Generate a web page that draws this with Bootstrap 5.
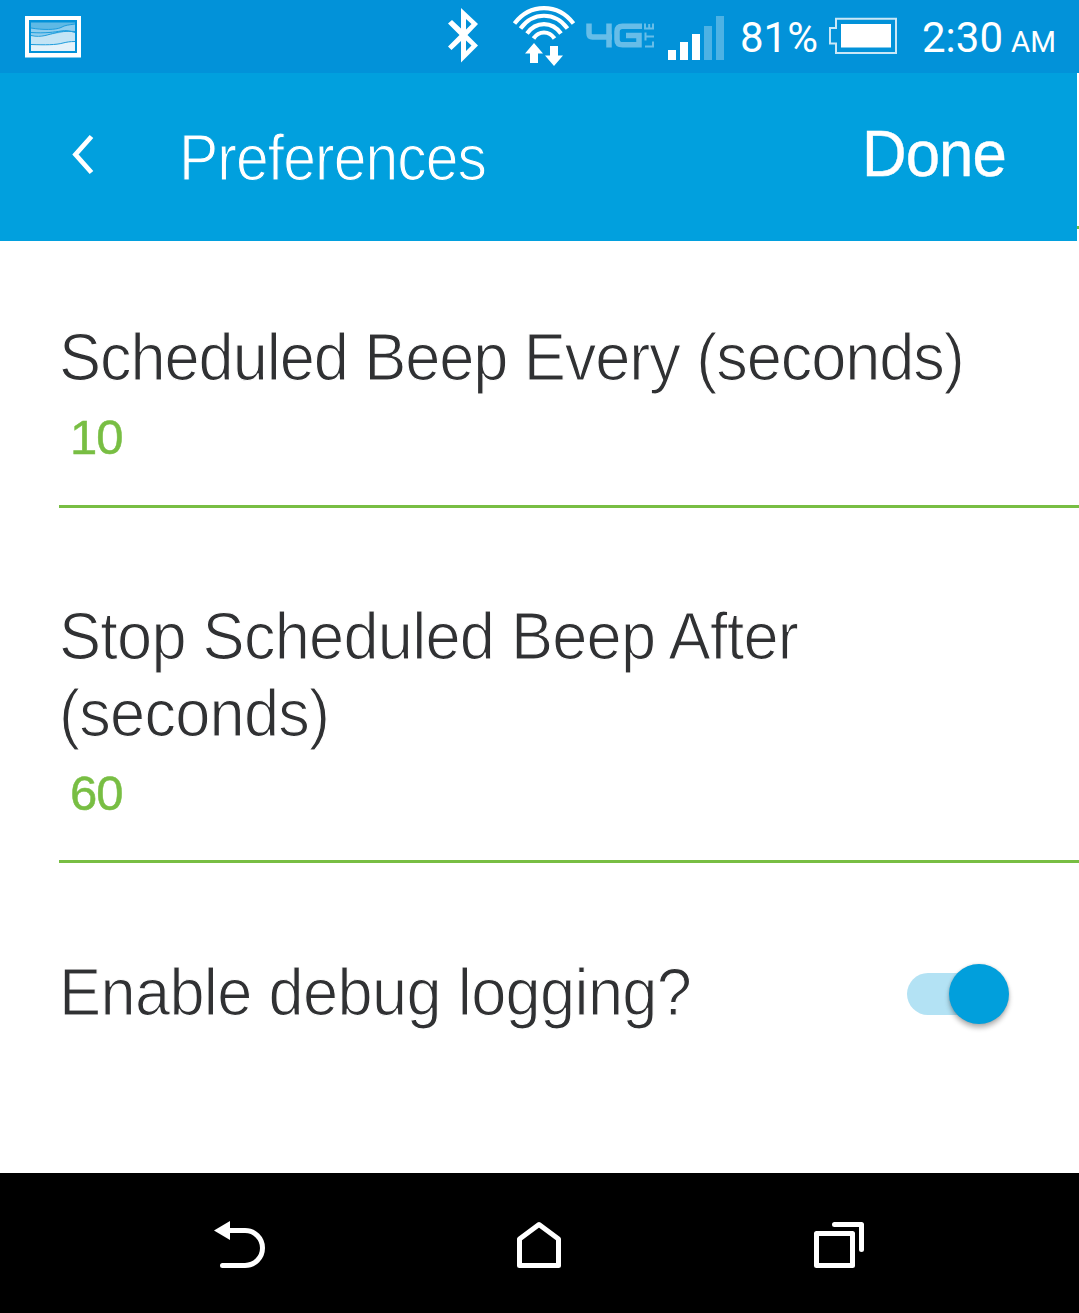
<!DOCTYPE html>
<html lang="en">
<head>
<meta charset="utf-8">
<meta name="viewport" content="width=device-width, initial-scale=1">
<title>Preferences</title>
<link href="https://cdn.jsdelivr.net/npm/bootstrap@5.3.0/dist/css/bootstrap.min.css" rel="stylesheet">
<style>
  body { font-family: "Liberation Sans", Arial, sans-serif; color: #303133; background: #fff; }
  .screen { width: 1079px; height: 1313px; }
  .status-bar { height: 73px; background: #0292d9; font-family: Roboto, sans-serif; color: #fff; }
  .status-bar svg, .nav-keys svg, .back-key svg { display: block; }
  .battery-level { font-size: 42px; line-height: 50px; margin-left: 16px; width: 89px; padding-top: 2px; }
  .clock { font-size: 42px; line-height: 50px; margin-left: 25px; padding-top: 6px; white-space: nowrap; }
  .clock span { font-size: 29.5px; margin-left: 8px; }
  .app-bar { height: 168px; width: 1077px; background: #01a0de; color: #fff; }
  .edge-mark { width: 2px; height: 3px; margin-top: 153px; background: #78be43; }
  .back-key { margin: -7px 0 0 72px; width: 108px; }
  .thin { display: inline-block; transform-origin: 0 0; white-space: nowrap; }
  .title-text { font-size: 64.5px; line-height: 76px; font-weight: 400; letter-spacing: -1px; transform: scaleX(.912); -webkit-text-stroke: 1.2px #01a0de; margin: 1px 0 0 -1px; }
  .done-btn { font-size: 64px; line-height: 76px; letter-spacing: -1px; transform: scaleX(.965); transform-origin: 0 0; margin-top: -6px; width: 215px; color: #fff; -webkit-text-stroke: .4px #fff; }
  .pref { margin-left: 59px; border-bottom: 3px solid #78be43; }
  .pref-label { font-size: 67px; line-height: 77px; letter-spacing: -1.13px; transform: scaleX(.942); -webkit-text-stroke: 1.2px #fff; }
  .pref-value { font-size: 49px; line-height: 60px; letter-spacing: -1px; color: #78be43; -webkit-text-stroke: .5px #78be43; margin: 12px 0 38px 11px; }
  .pref-every { padding-top: 77px; height: 267px; }
  .pref-stop { padding-top: 89px; height: 355px; }
  .pref-stop .pref-label { letter-spacing: -.8px; }
  .pref-debug { padding-top: 90px; margin-left: 59px; }
  .pref-debug .pref-label { letter-spacing: -.68px; }
  .toggle { width: 102px; height: 60px; margin: 11px 70px 0 0; }
  .toggle-track { width: 84px; height: 42px; background: #b3e2f4; }
  .toggle-thumb { width: 60px; height: 60px; right: 0; top: 0; background: #019fdc; box-shadow: 0 4px 5px rgba(0,0,0,.28), 0 0 3px rgba(0,0,0,.15); }
  .nav-keys { height: 140px; background: #000; }
</style>
<script src="https://cdn.jsdelivr.net/npm/bootstrap@5.3.0/dist/js/bootstrap.bundle.min.js"></script>
</head>
<body>
<div class="screen d-flex flex-column overflow-hidden">
  <div class="status-bar d-flex align-items-center flex-shrink-0">
    <svg width="724" height="73" viewBox="0 0 724 73" fill="none">
      <!-- gallery notification -->
      <path d="M25 16H81V57.500H25z" fill="#fff"/>
      <path d="M29 20H77V53H29z" fill="#0292d9"/>
      <path d="M31 22.500H75V51H31z" fill="#5eb9e5"/>
      <path d="M31 28C42 30 56 30 61 27.500C65 25 69 25 75 24V51H31z" fill="#8fcdee"/>
      <path d="M31 35C45 38 57 32 75 31V51H31z" fill="#c3e4f5"/>
      <path d="M31 44.500C45 45 56 45 63 43C67 42 70 41.500 75 41.500V51H31z" fill="#e4f2fa"/>
      <path d="M31 28C42 30 56 30 61 27.500C65 25 69 25 75 24M31 32.500C45 33.500 55 32 61 31C66 30 70 31 75 32.500M31 35.500C42 38 49 34 55 33C60 31.500 66 31 75 31.500M31 44.500C45 45 56 45 63 43C67 42 70 41.500 75 41.500" stroke="#1c9cdc"/>
      <!-- bluetooth -->
      <path fill-rule="evenodd" d="M461 8L478 24L467.500 35L478 45.500L461 62.500V41L451.500 50L448 46.500L459.500 35L448 23.500L452 20L461 28.500zM466 19V29.500L471.500 24zM466 40.500V51L471.500 45.500z" fill="#fff"/>
      <!-- wifi -->
      <g stroke="#fff" stroke-width="4.200">
        <path d="M514.500 23.500C530 3 558 3 573.500 23.500"/>
        <path d="M520.500 28.500C533 11.500 555 11.500 567.500 28.500"/>
        <path d="M527 33.500C536 21 552 21 561 33.500"/>
        <path d="M533.500 38.500C539 30.500 549 30.500 554.500 38.500"/>
      </g>
      <path d="M534 43L543 53.500H538V63H530V53.500H525zM550 46H558V55.500H563L554 66L545 55.500H550z" fill="#fff"/>
      <!-- 4G LTE network badge -->
      <g stroke="#67bde8" stroke-width="5.500">
        <path d="M589 23.500V33.500Q589 37 592.500 37H612M609 23.500V47.500"/>
        <path d="M642 26.200H622.500Q617 26.200 617 31.500V39.500Q617 44.800 622.500 44.800H639V35.500H626"/>
      </g>
      <path d="M645.500 29V24H653V29M649.200 24V28.500" stroke="none"/>
      <path d="M645 23.500V28.500H653V23.500M649.200 24V28.500M645 36.500H654M645.500 32.500V40.500M645 46.500H653V41.500" stroke="#67bde8" stroke-width="2"/>
      <!-- signal -->
      <path d="M668 50h8v10h-8zM680 42h8v18h-8zM692 34h8v26h-8z" fill="#fff"/>
      <path d="M704 26h8v34h-8zM716 16h8v44h-8z" fill="#4db2e4"/>
    </svg>
    <div class="battery-level">81%</div>
    <svg width="68" height="73" viewBox="0 0 68 73">
      <path d="M7 18.700H67V53H7V43.500H1V28H7z" fill="none" stroke="#c9e7f7" stroke-width="2"/>
      <path d="M12 24H62V47.500H12z" fill="#fff"/>
    </svg>
    <div class="clock">2:30<span>AM</span></div>
  </div>

  <div class="d-flex flex-shrink-0">
    <header class="app-bar d-flex align-items-center flex-shrink-0">
      <a class="back-key" href="#" aria-label="Back">
        <svg width="24" height="44" viewBox="0 0 24 44"><path d="M19.500 4.500L3.500 22.500L19.500 40.500" fill="none" stroke="#fff" stroke-width="4.800"/></svg>
      </a>
      <h1 class="title-text thin">Preferences</h1>
      <button class="done-btn btn p-0 border-0 text-start ms-auto" type="button">Done</button>
    </header>
    <div class="edge-mark"></div>
  </div>

  <main class="flex-grow-1">
    <section class="pref pref-every">
      <div class="pref-label thin d-block">Scheduled Beep Every (seconds)</div>
      <div class="pref-value">10</div>
    </section>
    <section class="pref pref-stop">
      <div class="pref-label thin d-block">Stop Scheduled Beep After<br>(seconds)</div>
      <div class="pref-value">60</div>
    </section>
    <section class="pref-debug d-flex justify-content-between align-items-start">
      <div class="pref-label thin">Enable debug logging?</div>
      <div class="toggle position-relative d-flex align-items-center" role="switch" aria-checked="true">
        <div class="toggle-track rounded-pill"></div>
        <div class="toggle-thumb position-absolute rounded-circle"></div>
      </div>
    </section>
  </main>

  <nav class="nav-keys flex-shrink-0">
    <svg width="1079" height="140" viewBox="0 1173 1079 140" fill="none" stroke="#fff" stroke-width="5" stroke-linecap="round" stroke-linejoin="round">
      <path d="M228 1230.500H245A17.500 17.500 0 0 1 245 1265.500H222.500"/>
      <path d="M214 1230.500L230 1221V1240z" fill="#fff" stroke="none"/>
      <path d="M519.500 1239L539 1224.500L558.500 1239V1265.500H519.500z"/>
      <path d="M816.500 1233.500H852.500V1265.500H816.500zM834.500 1224.500H861.500V1249.500"/>
    </svg>
  </nav>
</div>
</body>
</html>
